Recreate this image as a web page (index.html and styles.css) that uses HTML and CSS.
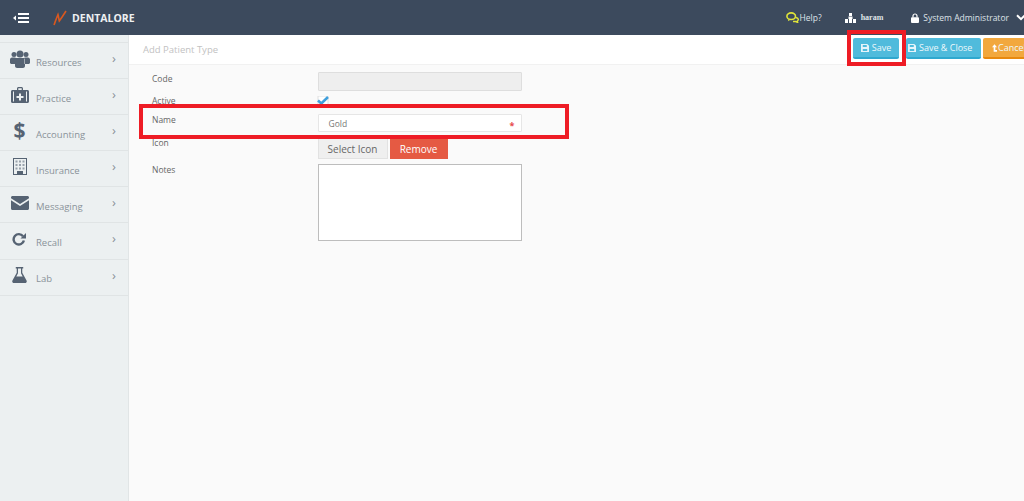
FILE: index.html
```html
<!DOCTYPE html>
<html lang="en">
<head>
<meta charset="utf-8">
<title>Add Patient Type</title>
<link rel="stylesheet" href="styles.css">
</head>
<body>
<header class="topbar">
  <div class="top-left">
    <svg class="menu-toggle" viewBox="0 0 16 10" width="16" height="10"><path d="M0 5l3-2.600v5.200z" fill="#fff"/><path d="M5 1h11M5 5h11M5 9h11" stroke="#fff" stroke-width="1.800"/></svg>
    <svg class="logo-mark" viewBox="0 0 14 16" width="14" height="16"><path d="M1 15C2.500 11 3.500 8 5 4.500c.6 2 .8 4.500 1.300 6.500C8.500 8 10.500 5 13 1" fill="none" stroke="#d9581f" stroke-width="1.600"/></svg>
    <span class="brand">DENTALORE</span>
  </div>
  <div class="top-right">
    <span class="top-item help"><svg viewBox="0 0 13 11" width="13" height="11"><ellipse cx="5.200" cy="4.200" rx="4.300" ry="3.300" fill="#3c4a5d" stroke="#dfe43a" stroke-width="1.600"/><path d="M9.500 5.500c1.800.3 3 1 2.800 2.200-.1.800-.7 1.200-1 1.400l.4 1.400-2-1H7" fill="none" stroke="#dfe43a" stroke-width="1.400"/><path d="M2.500 7l-.6 2.200 2.600-1.500z" fill="#dfe43a"/></svg>Help?</span>
    <span class="top-item org"><svg viewBox="0 0 11 10" width="11" height="10"><path d="M4 0h3v3H4zM3.500 3.500h4V6h-4zM0 6h3v4H0zM4 6h3v4H4zM8 6h3v4H8z" fill="#fff"/></svg><b class="org-name">haram</b></span>
    <span class="top-item user"><svg viewBox="0 0 8 10" width="8" height="10"><path d="M2 4.500V3a2 2 0 0 1 4 0v1.500" fill="none" stroke="#fff" stroke-width="1.200"/><rect y="4.200" width="8" height="5.800" rx="1" fill="#fff"/></svg>System Administrator</span>
    <svg class="caret" viewBox="0 0 10 7" width="10" height="7"><path d="M1 1.200l4 4 4-4" fill="none" stroke="#fff" stroke-width="2"/></svg>
  </div>
</header>
<div class="shell">
  <nav class="sidebar">
    <a class="nav-item"><span class="nav-icon"><svg viewBox="0 0 20 18" width="20" height="18"><circle cx="4" cy="4.500" r="2.500"/><circle cx="16" cy="4.500" r="2.500"/><circle cx="10" cy="4" r="3.500"/><path d="M0 13V9.500C0 8 1.500 7.500 3 7.500h2.500v6.500H1zM20 13V9.500C20 8 18.500 7.500 17 7.500h-2.500v6.500H19zM6.200 8h7.600c.7 0 1.200.6 1.200 1.300V16c0 1-1 2-2 2H7c-1 0-2-1-2-2V9.300C5 8.600 5.500 8 6.200 8z"/></svg></span><span class="nav-label">Resources</span><span class="chev">›</span></a>
    <a class="nav-item"><span class="nav-icon"><svg viewBox="0 0 18 16" width="18" height="16"><path fill-rule="evenodd" d="M6 3V1.500C6 .7 6.700 0 7.500 0h3c.8 0 1.500.7 1.500 1.500V3h4.500c.8 0 1.500.7 1.500 1.500v10c0 .8-.7 1.500-1.500 1.500h-15C.7 16 0 15.300 0 14.500v-10C0 3.700.7 3 1.500 3zm1.300 0h3.400V1.300H7.300zM3 4.500H2v10h1zm13 0h-1v10h1zM8 6.500V9H5.500v2H8v2.500h2V11h2.500V9H10V6.500z"/></svg></span><span class="nav-label">Practice</span><span class="chev">›</span></a>
    <a class="nav-item"><span class="nav-icon"><span class="dollar">$</span></span><span class="nav-label">Accounting</span><span class="chev">›</span></a>
    <a class="nav-item"><span class="nav-icon"><svg viewBox="0 0 14 17" width="14" height="17"><path fill-rule="evenodd" d="M0 0h14v17H0zM1 1v15h3v-3h6v3h3V1z"/><path d="M2.500 2.500h2v2h-2zM6 2.500h2v2H6zM9.500 2.500h2v2h-2zM2.500 6h2v2h-2zM6 6h2v2H6zM9.500 6h2v2h-2zM2.500 9.500h2v2h-2zM6 9.500h2v2H6zM9.500 9.500h2v2h-2z" opacity=".55"/></svg></span><span class="nav-label">Insurance</span><span class="chev">›</span></a>
    <a class="nav-item"><span class="nav-icon"><svg viewBox="0 0 18 14" width="18" height="14"><path d="M1.500 0h15C17.300 0 18 .7 18 1.500v.8L9 8 0 2.300v-.8C0 .7.700 0 1.500 0zM0 4.200L9 10l9-5.800v8.300c0 .8-.7 1.500-1.500 1.500h-15C.7 14 0 13.300 0 12.500z"/></svg></span><span class="nav-label">Messaging</span><span class="chev">›</span></a>
    <a class="nav-item"><span class="nav-icon nudge-left"><svg viewBox="0 0 14 14" width="14" height="14"><path d="M11 4.200A5.200 5.200 0 1 0 11.900 8.500" fill="none" stroke="#566373" stroke-width="2.400"/><path d="M14 1v5.500H8.500z"/></svg></span><span class="nav-label">Recall</span><span class="chev">›</span></a>
    <a class="nav-item"><span class="nav-icon"><svg viewBox="0 0 14 15" width="15" height="16"><path fill-rule="evenodd" d="M3.500 0h7v1.300H9.600v4.200l4 7.200c.6 1.100-.1 2.300-1.300 2.300H1.700C.5 15-.2 13.800.4 12.700l4-7.200V1.300h-.9zM5.600 1.300v4.500L4 8.800h6L8.400 5.800V1.300z"/></svg></span><span class="nav-label">Lab</span><span class="chev">›</span></a>
  </nav>
  <main class="content">
    <div class="page-head">
      <h1 class="page-title">Add Patient Type</h1>
      <div class="actions">
        <button class="btn btn-info btn-save"><svg class="save-ico" viewBox="0 0 9 9" width="8" height="8"><path fill-rule="evenodd" d="M0 0h7l2 2v7H0zM2 1v2.500h4.500V1zM2 5.500V8h5V5.500z" fill="#e6f4fa"/></svg>Save</button>
        <button class="btn btn-info btn-close"><svg class="save-ico" viewBox="0 0 9 9" width="8" height="8"><path fill-rule="evenodd" d="M0 0h7l2 2v7H0zM2 1v2.500h4.500V1zM2 5.500V8h5V5.500z" fill="#e6f4fa"/></svg>Save &amp; Close</button>
        <button class="btn btn-warn"><svg class="up-ico" viewBox="0 0 6 9" width="5" height="8"><path d="M3 0l3 3.500H4V7h2v2H2V3.500H0z" fill="#fff"/></svg>Cancel</button>
      </div>
    </div>
    <form class="form">
      <div class="row row-code"><label class="lbl">Code</label><div class="input input-disabled"></div></div>
      <div class="row row-active"><label class="lbl">Active</label><svg class="check" viewBox="0 0 12 10" width="12" height="10"><path d="M1 0h10v9H1z" fill="#fff" stroke="#e0e0e0"/><path d="M1 4.500l3.300 3L11 1" fill="none" stroke="#3f9fdc" stroke-width="2.600"/></svg></div>
      <div class="row row-name"><label class="lbl">Name</label><div class="input input-name"><span>Gold</span><i class="req">*</i></div></div>
      <div class="row row-icon"><label class="lbl">Icon</label><div class="btn-pair"><span class="btn-select">Select Icon</span><span class="btn-remove">Remove</span></div></div>
      <div class="row row-notes"><label class="lbl">Notes</label><div class="textarea"></div></div>
    </form>
  </main>
</div>
<div class="mark mark-save"></div>
<div class="mark mark-name"></div>
</body>
</html>
```
FILE: styles.css
```css
* { box-sizing: border-box; }
html, body { margin: 0; height: 501px; overflow: hidden; }
body { font-family: "Open Sans", sans-serif; background: #fafafa; color: #666; position: relative; }
.topbar { height: 35px; background: #3c4a5d; display: flex; justify-content: space-between; align-items: center; color: #fff; }
.top-left { display: flex; align-items: center; padding-left: 13px; }
.menu-toggle { margin-right: 24px; }
.logo-mark { margin-right: 5px; }
.brand { font-size: 10.500px; font-weight: 700; letter-spacing: 0; color: #eef0f2; }
.top-right { display: flex; align-items: center; font-size: 8.500px; color: #dfe3e8; margin-right: -2px; }
.top-item { display: flex; align-items: center; }
.help svg { margin-right: 1px; }
.help { margin-right: 23px; }
.org { margin-right: 28px; }
.org svg { margin-right: 5px; }
.org-name { font-family: "Liberation Serif", serif; font-size: 8px; font-weight: 700; }
.user svg { margin-right: 4px; }
.caret { margin-left: 7px; }
.shell { display: flex; height: 466px; }
.sidebar { width: 129px; flex: none; background: #ecf0f1; border-right: 1px solid #e1e5e6; padding-top: 7px; }
.nav-item { height: 36.100px; display: flex; align-items: center; border-top: 1px solid #e0e4e5; position: relative; }
.nav-item:last-child { border-bottom: 1px solid #e0e4e5; height: 37px; }
.nav-icon { width: 36px; height: 100%; flex: none; display: flex; align-items: center; justify-content: center; padding: 0 0 4px 3px; }
.nudge-left { padding-left: 1px; }
.nav-icon svg { fill: #566373; display: block; }
.dollar { font-size: 21px; font-weight: 700; color: #566373; line-height: 1; }
.nav-label { font-size: 9.500px; color: #8a9299; padding-top: 3px; }
.chev { position: absolute; left: 112px; top: 9px; font-size: 13px; line-height: 1; color: #8a9299; }
.content { flex: 1; min-width: 0; }
.page-head { height: 30px; border-bottom: 1px solid #f1f1f1; background: #fff; display: flex; justify-content: space-between; padding-left: 14px; }
.page-title { margin: 0; font-size: 9.500px; font-weight: 400; color: #c2c2c2; line-height: 30px; }
.actions { display: flex; gap: 2px; padding: 3px 0 0; width: 171px; flex: none; overflow: hidden; }
.btn { height: 21px; border: 0; border-bottom: 2px solid #2fa8cf; border-radius: 2px; background: #50bbdc; color: #eef8fb; font: 9px "Open Sans", sans-serif; padding: 0; display: flex; align-items: center; justify-content: center; flex: none; }
.btn-save { width: 46px; margin-right: 5px; }
.btn-close { width: 75px; justify-content: flex-start; padding-left: 2px; }
.btn-warn { width: 50px; background: #f2a83e; border-bottom-color: #e8890f; justify-content: flex-start; padding-left: 9px; }
.save-ico { margin-right: 3px; }
.up-ico { margin-right: 1px; }
.form { padding-top: 8px; }
.row { display: flex; position: relative; }
.lbl { width: 189px; flex: none; padding-left: 23px; font-size: 8.500px; color: #666; line-height: 12px; }
.input { width: 204px; height: 19px; border: 1px solid #e6e6e6; border-radius: 1px; background: #fff; margin-left: -.5px; }
.input-disabled { background: #eeeeee; border-color: #dedede; margin-top: -1px; }
.row-code { height: 22px; }
.row-active { height: 19px; }
.check { margin: 1px 0 0 -1px; }
.row-name { height: 23px; }
.input-name { height: 18px; display: flex; justify-content: space-between; align-items: center; padding: 0 8px 0 10px; font-size: 8.500px; color: #777; }
.req { color: #e64b4b; font-style: normal; font-weight: 700; font-size: 9px; line-height: 8px; height: 5px; margin: 2px -2px 0 0; }
.row-icon { height: 27px; }
.btn-pair { display: flex; gap: 2px; height: 21px; font-size: 10px; }
.row-icon .btn-pair { margin: 1px 0 0 -.5px; }
.btn-select { width: 70px; background: #efefef; border: 1px solid #e2e2e2; color: #666; display: flex; align-items: center; justify-content: center; }
.btn-remove { width: 58px; background: #e55a43; color: #fff; display: flex; align-items: center; justify-content: center; }
.textarea { width: 204px; height: 77px; border: 1px solid #bdbdbd; background: #fff; margin-left: -.5px; }
.mark { position: absolute; border: 4px solid #ee1c25; pointer-events: none; }
.mark-save { left: 847px; top: 30px; width: 59px; height: 36px; }
.mark-name { left: 139px; top: 104px; width: 430px; height: 35px; }
```
